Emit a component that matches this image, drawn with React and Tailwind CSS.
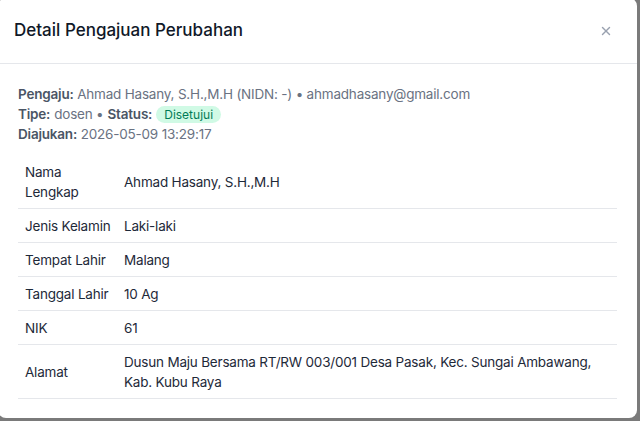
import React from "react";
import { X } from "lucide-react";

const rows = [
  { label: "Nama Lengkap", value: "Ahmad Hasany, S.H.,M.H" },
  { label: "Jenis Kelamin", value: "Laki-laki" },
  { label: "Tempat Lahir", value: "Malang" },
  { label: "Tanggal Lahir", value: "10 Ag" },
  { label: "NIK", value: "61" },
  {
    label: "Alamat",
    value: "Dusun Maju Bersama RT/RW 003/001 Desa Pasak, Kec. Sungai Ambawang, Kab. Kubu Raya",
  },
];

const App = () => {
  return (
    <div
      className="w-[640px] h-[421px] overflow-hidden bg-[#7a7a7a]"
      style={{ fontFamily: "Inter, 'Noto Sans', sans-serif" }}
    >
      <div className="-ml-[2px] -mt-[2px] w-[639px] h-[420px] bg-white rounded-lg overflow-hidden">
        {/* Header */}
        <div className="h-[66px] flex items-center justify-between pl-4 pr-6 border-b border-gray-200">
          <h2 className="text-[17px] font-medium text-gray-900">Detail Pengajuan Perubahan</h2>
          <button className="text-gray-400">
            <X className="w-3.5 h-3.5" strokeWidth={2.5} />
          </button>
        </div>

        {/* Body */}
        <div className="px-5 pt-5 text-[13.5px] tracking-[-0.2px]">
          <div className="leading-5 text-gray-500">
            <div>
              <span className="font-semibold text-gray-600">Pengaju:</span> Ahmad Hasany, S.H.,M.H (NIDN: -) •
              ahmadhasany@gmail.com
            </div>
            <div className="flex items-center gap-1">
              <span className="font-semibold text-gray-600">Tipe:</span> dosen •
              <span className="font-semibold text-gray-600">Status:</span>
              <span className="px-2 rounded-full bg-emerald-100 text-emerald-700 text-xs tracking-normal leading-[17px]">
                Disetujui
              </span>
            </div>
            <div>
              <span className="font-semibold text-gray-600">Diajukan:</span> 2026-05-09 13:29:17
            </div>
          </div>

          <table className="w-full table-fixed mt-[11px] leading-5 text-gray-800">
            <colgroup>
              <col className="w-[106px]" />
              <col />
            </colgroup>
            <tbody>
              {rows.map((r) => (
                <tr key={r.label} className="border-b border-gray-200">
                  <td className="px-[7px] py-[6.5px] align-middle">{r.label}</td>
                  <td className="pr-4 py-[6.5px] align-middle">{r.value}</td>
                </tr>
              ))}
            </tbody>
          </table>
        </div>
      </div>
    </div>
  );
};

export default App;
